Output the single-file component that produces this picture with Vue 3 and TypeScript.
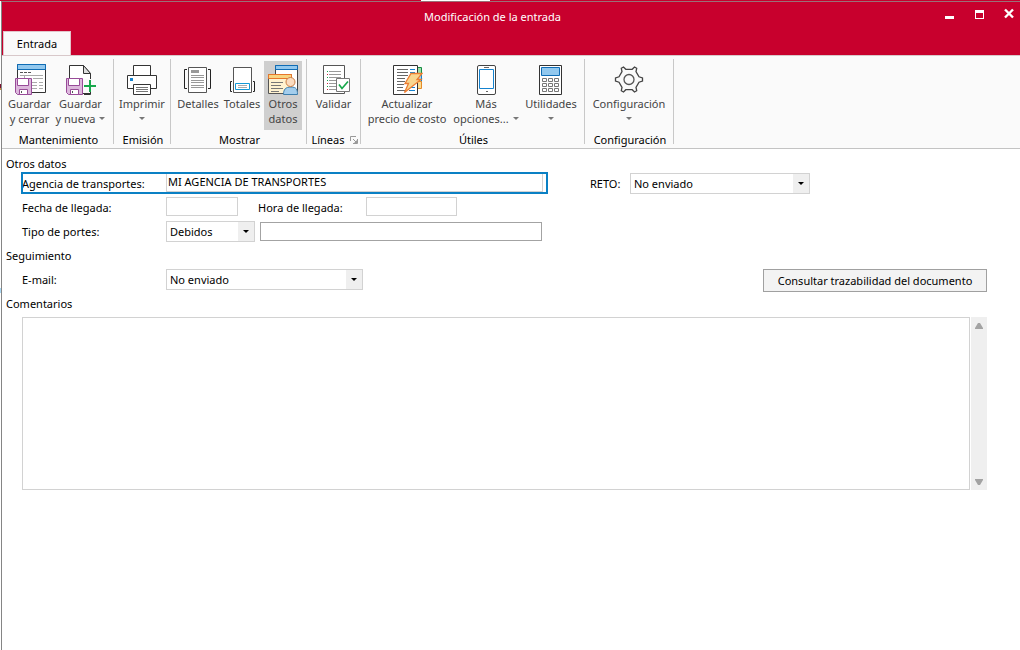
<script setup lang="ts">
import { ref } from 'vue'

interface Action {
  id: string
  lines: string[]
  menu?: 'inline' | 'below'
  active?: boolean
}

interface Group {
  id: string
  title: string
  launcher?: boolean
  actions: Action[]
}

const groups: Group[] = [
  {
    id: 'mantenimiento',
    title: 'Mantenimiento',
    actions: [
      { id: 'save-close', lines: ['Guardar', 'y cerrar'] },
      { id: 'save-new', lines: ['Guardar', 'y nueva'], menu: 'inline' },
    ],
  },
  { id: 'emision', title: 'Emisión', actions: [{ id: 'print', lines: ['Imprimir'], menu: 'below' }] },
  {
    id: 'mostrar',
    title: 'Mostrar',
    actions: [
      { id: 'details', lines: ['Detalles'] },
      { id: 'totals', lines: ['Totales'] },
      { id: 'other', lines: ['Otros', 'datos'], active: true },
    ],
  },
  { id: 'lineas', title: 'Líneas', launcher: true, actions: [{ id: 'validate', lines: ['Validar'] }] },
  {
    id: 'utiles',
    title: 'Útiles',
    actions: [
      { id: 'update', lines: ['Actualizar', 'precio de costo'] },
      { id: 'more', lines: ['Más', 'opciones...'], menu: 'inline' },
      { id: 'tools', lines: ['Utilidades'], menu: 'below' },
    ],
  },
  { id: 'configuracion', title: 'Configuración', actions: [{ id: 'settings', lines: ['Configuración'], menu: 'below' }] },
]

const agencia = ref('MI AGENCIA DE TRANSPORTES')
const fecha = ref('')
const hora = ref('')
const portes = ref('Debidos')
const portesDetalle = ref('')
const reto = ref('No enviado')
const email = ref('No enviado')
const comentarios = ref('')
</script>

<template>
  <div class="screen">
    <div class="sliver"></div>
    <div class="window">
      <header class="titlebar">
        <h1 class="title">Modificación de la entrada</h1>
        <div class="controls">
          <button type="button" aria-label="Minimizar">
            <svg width="11" height="11" viewBox="0 0 11 11"><path d="M1 8h9v3H1z" fill="#fff" /></svg>
          </button>
          <button type="button" aria-label="Maximizar">
            <svg width="11" height="11" viewBox="0 0 11 11"><path d="M1 2h9v9H1zM2 5v5h7V5z" fill="#fff" fill-rule="evenodd" /></svg>
          </button>
          <button type="button" aria-label="Cerrar">
            <svg width="11" height="11" viewBox="0 0 11 11"><path d="M1 1.500l8 8M9 1.500l-8 8" stroke="#fff" stroke-width="2.400" /></svg>
          </button>
        </div>
        <nav class="tabs"><button type="button" class="tab">Entrada</button></nav>
      </header>

      <div class="ribbon">
        <section v-for="g in groups" :key="g.id" class="group" :class="g.id">
          <div class="actions">
            <button v-for="a in g.actions" :key="a.id" type="button" class="action" :class="[a.id, { active: a.active }]">
              <svg class="icon" width="32" height="32" viewBox="0 0 32 32" fill="none" aria-hidden="true">
                <template v-if="a.id === 'save-close'">
                  <path d="M3.500 .5h28v28h-28z" fill="#fff" stroke="#333" />
                  <path d="M3.500 .5h28v5h-28z" fill="#92c8ee" stroke="#0f6cb5" />
                  <path d="M6 8.500h3M10 8.500h3M14 8.500h3" stroke="#555" />
                  <path d="M6 11.500h23M10.500 11v4M19 14.500h10" stroke="#aaa" />
                  <path d="M18 18.500h5M25 18.500h4M18 21.500h5M25 21.500h4M18 24.500h5M25 24.500h4" stroke="#aaa" />
                </template>
                <template v-if="a.id === 'save-new'">
                  <path d="M4.500 28V1.500h14l7 8V29.500H18" fill="#fff" stroke="#333" />
                  <path d="M18.500 1.500v8h7z" fill="#ddd" stroke="#333" />
                  <path d="M18 15h14v14H18z" fill="#fafafa" />
                  <path d="M25.500 28v2.500H19" stroke="#333" />
                  <path d="M25 16v12M19 22h12" stroke="#17a84b" stroke-width="2" />
                </template>
                <template v-if="a.id === 'save-close' || a.id === 'save-new'">
                  <path d="M1.500 14.500h16v16h-14l-2-2z" fill="#dcb8dc" stroke="#984b98" />
                  <path d="M3.500 14.500h11v7h-11z" fill="#fff" stroke="#984b98" />
                  <path d="M5.500 25.500h8v5h-8z" fill="#fff" stroke="#984b98" />
                  <path d="M7.500 27v2" stroke="#555" />
                </template>
                <template v-if="a.id === 'print'">
                  <path d="M7.500 11V1.500h17V11" fill="#fff" stroke="#333" />
                  <path d="M1.500 11.500h29v13h-29z" fill="#fff" stroke="#333" />
                  <path d="M4 14h3v3H4z" fill="#1583cf" />
                  <path d="M7.500 20.500h17v10h-17z" fill="#fff" stroke="#333" />
                  <path d="M10 23.500h12M10 25.500h12M10 27.500h12" stroke="#777" />
                </template>
                <template v-if="a.id === 'details'">
                  <path d="M5 5.500H2.500v19H5M26 5.500h2.500v19H26" stroke="#222" />
                  <path d="M6.500 3.500h18v25h-18z" fill="#fff" stroke="#555" />
                  <path d="M9 6h8v3H9z" fill="#999" />
                  <path d="M9 11.500h13M9 13.500h13M9 16.500h13M9 18.500h13M9 21.500h13M9 23.500h13" stroke="#999" />
                </template>
                <template v-if="a.id === 'totals'">
                  <path d="M6 17.500H4.500v10H6M27 17.500h1.500v10H27" stroke="#222" />
                  <path d="M7.500 3.500h18v25h-18z" fill="#fff" stroke="#555" />
                  <path d="M9.500 19.500h14v6h-14z" fill="#fff" stroke="#1499d6" />
                  <path d="M12 21.500h9M12 23.500h9" stroke="#aaa" />
                </template>
                <template v-if="a.id === 'other'">
                  <path d="M8.500 1.500h22v26h-22z" fill="#fff" stroke="#444" />
                  <path d="M8.500 1.500h22v4h-22z" fill="#92c8ee" stroke="#0f6cb5" />
                  <path d="M1.500 10.500h23v19h-23z" fill="#fff2d0" stroke="#555" />
                  <path d="M1.500 10.500h23v4h-23z" fill="#f8d480" stroke="#e7762b" />
                  <path d="M4 18.500h12M4 21.500h10M4 24.500h12M4 27.500h8" stroke="#777" />
                  <path d="M16.500 30.500c0-5 2-7.500 7.500-7.500s6.500 2.500 6.500 7.500z" fill="#a3cdec" stroke="#3d7fae" />
                  <circle cx="23.500" cy="18" r="4.500" fill="#fbdcc0" stroke="#c97e45" />
                </template>
                <template v-if="a.id === 'validate'">
                  <path d="M5.500 1.500h21v28h-21z" fill="#fff" stroke="#555" />
                  <path d="M11 7.500h12M11 10.500h12M11 13.500h12M11 16.500h7M11 19.500h7M11 22.500h7M11 25.500h7" stroke="#999" />
                  <path d="M9 7.500h1M9 13.500h1M9 16.500h1M9 22.500h1" stroke="#17a84b" />
                  <path d="M9 10.500h1M9 19.500h1M9 25.500h1" stroke="#d0213b" />
                  <path d="M18.500 14.500h13v13h-13z" fill="#fff" stroke="#777" />
                  <path d="M21 20.500l3 4 6-7" stroke="#17a84b" stroke-width="1.700" />
                </template>
                <template v-if="a.id === 'update'">
                  <path d="M26.500 3.500h4v8h-4z" fill="#9be0ab" stroke="#168a42" />
                  <path d="M26.500 11.500h4v6h-4z" fill="#a6d3f2" stroke="#1583cf" />
                  <path d="M26.500 17.500h4v7h-4z" fill="#fbdc8e" stroke="#e58a2b" />
                  <path d="M2.500 1.500h24v29h-24z" fill="#fff" stroke="#333" />
                  <path d="M6 5.500h11M6 8.500h11M6 11.500h11M6 14.500h8M6 17.500h8M6 20.500h7M6 23.500h6M6 26.500h8M18 26.500h5" stroke="#666" />
                  <path d="M19 5.500h5M19 8.500h5M19 23.500h5M19 26.500h5" stroke="#1583cf" />
                  <path d="M20 9.500h11l-5 6h4L13.500 28.500l4-9H14z" fill="#f8d690" stroke="#ed7d31" stroke-width="1.300" />
                </template>
                <template v-if="a.id === 'more'">
                  <rect x="7.500" y="1.500" width="18" height="29" rx="1.500" fill="#fff" stroke="#444" />
                  <path d="M9.500 5.500h14v19h-14z" stroke="#1583cf" />
                  <path d="M14 3.500h5M16 27.500h2" stroke="#666" />
                </template>
                <template v-if="a.id === 'tools'">
                  <path d="M4.500 1.500h22v29h-22z" fill="#fff" stroke="#333" />
                  <path d="M6.500 3.500h18v8h-18z" fill="#92c8ee" stroke="#0f6cb5" />
                  <path
                    d="M7.500 14.500h4v3h-4zM13.500 14.500h4v3h-4zM19.500 14.500h4v3h-4zM7.500 19.500h4v3h-4zM13.500 19.500h4v3h-4zM19.500 19.500h4v3h-4zM7.500 24.500h4v3h-4zM13.500 24.500h4v3h-4zM19.500 24.500h4v3h-4z"
                    stroke="#777"
                  />
                </template>
                <template v-if="a.id === 'settings'">
                  <path
                    d="M8.300 4.300l2.200-1.300 2.300 2.300h6.400l2.300-2.300 2.200 1.300-.7 3.300 3 5.200 3.500 1.200v3l-3.500 1.200-3 5.200.7 3.300-2.200 1.300-2.300-2.300h-6.400l-2.300 2.300-2.200-1.300.7-3.300-3-5.200-3.500-1.200v-3l3.500-1.200 3-5.200z"
                    stroke="#444"
                    stroke-width="1.300"
                  />
                  <circle cx="16" cy="15.500" r="5" stroke="#555" stroke-width="1.300" />
                </template>
              </svg>
              <span v-for="(line, i) in a.lines" :key="line" class="line">
                {{ line }}<i v-if="a.menu === 'inline' && i === a.lines.length - 1" class="caret"></i>
              </span>
              <span v-if="a.menu === 'below'" class="line"><i class="caret"></i></span>
            </button>
          </div>
          <div class="caption">
            <span>{{ g.title }}</span>
            <button v-if="g.launcher" type="button" class="launcher" aria-label="Opciones de líneas">
              <svg width="8" height="8" viewBox="0 0 8 8" fill="none">
                <path d="M.5 5V.5H6M7.500 3v4.500H3M3 3l4 4" stroke="#999" />
                <path d="M7 4v3H4z" fill="#999" />
              </svg>
            </button>
          </div>
        </section>
      </div>

      <main class="form">
        <h2>Otros datos</h2>
        <div class="columns">
          <div class="main-column">
            <div class="row focused">
              <label for="agencia">Agencia de transportes:</label>
              <input id="agencia" v-model="agencia" type="text" class="agencia-input" />
            </div>
            <div class="row">
              <label for="fecha">Fecha de llegada:</label>
              <input id="fecha" v-model="fecha" type="text" class="fecha-input" />
              <label for="hora" class="hora-label">Hora de llegada:</label>
              <input id="hora" v-model="hora" type="text" class="hora-input" />
            </div>
            <div class="row">
              <label for="portes">Tipo de portes:</label>
              <div class="select portes-select">
                <select id="portes" v-model="portes">
                  <option>Debidos</option>
                  <option>Pagados</option>
                </select>
                <i class="arrow"></i>
              </div>
              <input v-model="portesDetalle" type="text" class="portes-input" aria-label="Detalle de portes" />
            </div>
          </div>
          <div class="row reto">
            <label for="reto">RETO:</label>
            <div class="select reto-select">
              <select id="reto" v-model="reto">
                <option>No enviado</option>
                <option>Enviado</option>
              </select>
              <i class="arrow"></i>
            </div>
          </div>
        </div>

        <h2 class="tall">Seguimiento</h2>
        <div class="row indented">
          <label for="email">E-mail:</label>
          <div class="select email-select">
            <select id="email" v-model="email">
              <option>No enviado</option>
              <option>Enviado</option>
            </select>
            <i class="arrow"></i>
          </div>
          <button type="button" class="trace">Consultar trazabilidad del documento</button>
        </div>

        <h2 class="tall"><label for="comentarios">Comentarios</label></h2>
        <div class="comments">
          <textarea id="comentarios" v-model="comentarios"></textarea>
          <div class="scroll">
            <button type="button" aria-label="Subir">
              <svg width="8" height="6" viewBox="0 0 8 6"><path d="M0 6V5l3-5h2l3 5v1z" fill="#a3a3a3" /></svg>
            </button>
            <button type="button" aria-label="Bajar">
              <svg width="8" height="6" viewBox="0 0 8 6"><path d="M0 0v1l3 5h2l3-5V0z" fill="#a3a3a3" /></svg>
            </button>
          </div>
        </div>
      </main>
    </div>
  </div>
</template>

<style>
body {
  margin: 0;
  background: #fff;
}
</style>

<style scoped>
.screen {
  box-sizing: border-box;
  min-height: 100vh;
  display: grid;
  grid-template-rows: 1px 1fr;
  padding-left: 1px;
  background: linear-gradient(#fff 84px, #7a1030 84px 88px, #c89040 88px 90px, #fff 90px 288px, #a8d8f4 288px 293px, #fff 293px);
  color: #000;
  font-family: "Noto Sans", "Open Sans", sans-serif;
  font-size: 11px;
  line-height: 16px;
}
.screen * {
  box-sizing: border-box;
}
button,
input,
select,
textarea {
  margin: 0;
  padding: 0;
  border: 0;
  border-radius: 0;
  background: none;
  color: inherit;
  font: inherit;
}
.sliver {
  margin-left: -1px;
  background: linear-gradient(90deg, #c8002d 421px, #fff 421px 490px, #c8002d 490px);
}
.window {
  border-top: 1px solid #9a7078;
  border-left: 1px solid #858585;
  background: #fff;
}
.titlebar {
  display: grid;
  grid-template-rows: 29px 24px;
  background: #c8002d;
}
.title {
  grid-area: 1 / 1;
  justify-self: center;
  margin: 7px 37px 0 0;
  color: #fff;
  font-size: 11px;
  font-weight: 400;
}
.controls {
  grid-area: 1 / 1;
  justify-self: end;
  display: flex;
  gap: 19px;
  padding: 6px 5px 0 0;
}
.controls button {
  width: 11px;
  height: 11px;
}
.controls svg,
.icon,
.launcher svg,
.scroll svg {
  display: block;
}
.tabs {
  grid-area: 2 / 1;
  padding-left: 1px;
}
.tab {
  width: 68px;
  height: 24px;
  border: 1px solid #e3c4ca;
  border-bottom: 0;
  background: #fafafa;
}
.ribbon {
  display: flex;
  height: 94px;
  border-top: 1px solid #d8c8ca;
  border-bottom: 1px solid #c3c3c3;
  background: #fafafa;
}
.group {
  display: flex;
  flex-direction: column;
  justify-content: space-between;
  height: 85px;
  margin-top: 3px;
  border-right: 1px solid #c8c8c8;
}
.mantenimiento { width: 112px; }
.emision { width: 57px; }
.mostrar { width: 136px; }
.lineas { width: 54px; }
.utiles { width: 224px; }
.configuracion { width: 89px; }
.actions {
  display: flex;
  justify-content: center;
  padding-top: 2px;
}
.mostrar .actions,
.utiles .actions {
  justify-content: flex-end;
  padding-right: 4px;
}
.utiles .actions {
  padding-right: 3px;
}
.action {
  display: flex;
  flex-direction: column;
  align-items: center;
  height: 69px;
  padding-top: 3px;
  color: #444;
  line-height: 15px;
  white-space: nowrap;
}
.save-close { width: 46px; }
.save-new { width: 56px; }
.print { width: 50px; }
.details { width: 44px; }
.totals { width: 44px; }
.other { width: 38px; }
.validate { width: 46px; }
.update { width: 88px; }
.more { width: 70px; }
.tools { width: 60px; }
.settings { width: 80px; }
.active {
  background: #cfcfcf;
}
.icon {
  flex: none;
}
.line {
  display: flex;
  align-items: center;
  justify-content: center;
  gap: 4px;
  height: 15px;
}
.caret {
  border: 3px solid transparent;
  border-top-color: #777;
  border-bottom: 0;
}
.caption {
  display: flex;
  align-items: center;
  justify-content: center;
  gap: 6px;
  height: 14px;
  margin-bottom: -3px;
  padding-left: 2px;
}
.lineas .caption {
  gap: 5px;
}
.launcher {
  width: 8px;
  height: 8px;
}
.form {
  padding: 7px 33px 20px 4px;
}
h2 {
  margin: 0;
  font-size: 11px;
  font-weight: 400;
  line-height: 16px;
}
.tall {
  line-height: 24px;
}
.columns {
  display: flex;
  gap: 42px;
  padding-left: 15px;
}
.main-column {
  width: 527px;
}
.row {
  display: flex;
  align-items: flex-start;
  height: 24px;
  padding-left: 1px;
}
.indented {
  margin-left: 15px;
}
.row label {
  flex: none;
  width: 144px;
  line-height: 24px;
}
.focused {
  height: 22px;
  margin-bottom: 2px;
  padding-right: 5px;
  outline: 2px solid #0a80c4;
  outline-offset: -2px;
}
input {
  height: 19px;
  padding: 0 2px;
  border: 1px solid #d2d2d2;
}
.focused .agencia-input {
  flex: 1;
  height: 20px;
  padding: 0 1px 2px;
  outline: 0;
}
.fecha-input {
  width: 72px;
  margin-top: 1px;
}
.row .hora-label {
  width: 108px;
  margin-left: 20px;
}
.hora-input {
  width: 91px;
  margin-top: 1px;
}
.portes-input {
  width: 282px;
  margin: 2px 0 0 5px;
  border-color: #a3a3a3;
}
.select {
  display: grid;
  grid-template-columns: 1fr 16px;
  height: 21px;
  margin-top: 1px;
  border: 1px solid #d2d2d2;
}
.select select {
  grid-area: 1 / 1 / 2 / 3;
  appearance: none;
  width: 100%;
  padding-left: 3px;
}
.arrow {
  grid-area: 1 / 2;
  display: grid;
  place-items: center;
  background: #efefef;
  pointer-events: none;
}
.arrow::after {
  content: "";
  border: 3px solid transparent;
  border-top-color: #000;
  border-bottom: 0;
}
.portes-select { width: 89px; }
.reto-select { width: 180px; }
.email-select { width: 197px; }
.row.reto {
  padding-left: 0;
}
.reto label {
  width: 40px;
}
.trace {
  width: 224px;
  height: 23px;
  margin: 1px 0 0 auto;
  border: 1px solid #a0a0a0;
  background: #f3f3f3;
}
.comments {
  display: flex;
  gap: 1px;
  height: 173px;
  margin: 1px 0 0 16px;
}
textarea {
  flex: 1;
  padding: 2px;
  border: 1px solid #d2d2d2;
  resize: none;
}
.scroll {
  display: flex;
  flex-direction: column;
  justify-content: space-between;
  width: 16px;
  background: #efefef;
}
.scroll button {
  display: grid;
  place-items: center;
  height: 17px;
}
</style>
